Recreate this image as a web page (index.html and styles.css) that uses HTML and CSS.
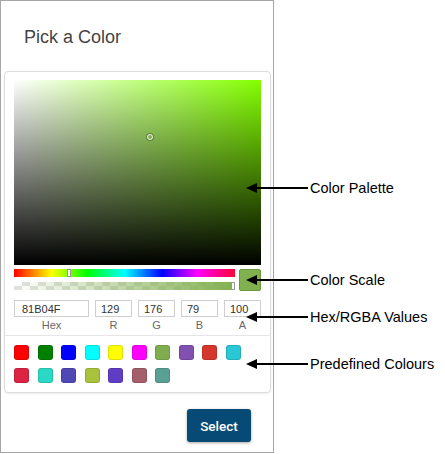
FILE: index.html
```html
<!DOCTYPE html>
<html lang="en">
<head>
    <meta charset="UTF-8">
    <meta name="viewport" content="width=device-width, initial-scale=1.0">
    <title>Pick a Color</title>
    <link rel="stylesheet" href="styles.css">
</head>
<body>
    <div id="dialog">
        <h2 class="title">Pick a Color</h2>
        <div class="card">
            <div class="picker">
                <div class="palette">
                    <span class="marker"></span>
                </div>
                <div class="scales">
                    <div class="bars">
                        <div class="hue"><span class="handle" style="left: 53px"></span></div>
                        <div class="alpha"><span class="handle" style="left: 217px"></span></div>
                    </div>
                    <div class="preview"></div>
                </div>
                <div class="values">
                    <div class="field hex">
                        <input type="text" value="81B04F">
                        <label>Hex</label>
                    </div>
                    <div class="field">
                        <input type="text" value="129">
                        <label>R</label>
                    </div>
                    <div class="field">
                        <input type="text" value="176">
                        <label>G</label>
                    </div>
                    <div class="field">
                        <input type="text" value="79">
                        <label>B</label>
                    </div>
                    <div class="field">
                        <input type="text" value="100">
                        <label>A</label>
                    </div>
                </div>
            </div>
            <div class="swatches">
                <span class="swatch" style="background: #ff0000"></span>
                <span class="swatch" style="background: #008000"></span>
                <span class="swatch" style="background: #0000ff"></span>
                <span class="swatch" style="background: #00ffff"></span>
                <span class="swatch" style="background: #ffff00"></span>
                <span class="swatch" style="background: #ff00ff"></span>
                <span class="swatch" style="background: #80ad4f"></span>
                <span class="swatch" style="background: #8150b0"></span>
                <span class="swatch" style="background: #d6372c"></span>
                <span class="swatch" style="background: #2ac7d4"></span>
                <span class="swatch" style="background: #dc2341"></span>
                <span class="swatch" style="background: #2ad9c5"></span>
                <span class="swatch" style="background: #4f48b5"></span>
                <span class="swatch" style="background: #a8c33b"></span>
                <span class="swatch" style="background: #5f3ec5"></span>
                <span class="swatch" style="background: #a45f6b"></span>
                <span class="swatch" style="background: #5a9f94"></span>
            </div>
        </div>
        <div class="actions">
            <button class="select">Select</button>
        </div>
    </div>

    <div class="note" style="top: 180px">
        <svg width="62" height="16" viewBox="0 0 62 16"><polygon points="0,8 11,3 11,13" fill="#000"/><rect x="8" y="7" width="54" height="2" fill="#000"/></svg>
        <span>Color Palette</span>
    </div>
    <div class="note" style="top: 272px">
        <svg width="62" height="16" viewBox="0 0 62 16"><polygon points="0,8 11,3 11,13" fill="#000"/><rect x="8" y="7" width="54" height="2" fill="#000"/></svg>
        <span>Color Scale</span>
    </div>
    <div class="note" style="top: 309px">
        <svg width="62" height="16" viewBox="0 0 62 16"><polygon points="0,8 11,3 11,13" fill="#000"/><rect x="8" y="7" width="54" height="2" fill="#000"/></svg>
        <span>Hex/RGBA Values</span>
    </div>
    <div class="note" style="top: 356px">
        <svg width="62" height="16" viewBox="0 0 62 16"><polygon points="0,8 11,3 11,13" fill="#000"/><rect x="8" y="7" width="54" height="2" fill="#000"/></svg>
        <span>Predefined Colours</span>
    </div>
</body>
</html>
```

FILE: styles.css
```css
body {
    margin: 0;
    background: #fff;
    font-family: "Liberation Sans", Arial, sans-serif;
    position: relative;
    width: 445px;
    height: 454px;
}
#dialog {
    box-sizing: border-box;
    width: 274px;
    height: 453px;
    border: 1px solid #a6a6a6;
    padding: 26px 2px 0 3px;
}
.title {
    margin: 0 0 24px 20px;
    font-size: 18px;
    line-height: 20px;
    font-weight: normal;
    color: #444;
}
.card {
    width: 267px;
    box-sizing: border-box;
    border: 1px solid #dcdcdc;
    border-radius: 4px;
    box-shadow: 0 1px 2px rgba(0, 0, 0, 0.08);
}
.picker {
    padding: 8px 9px 3px 9px;
}
.palette {
    position: relative;
    height: 185px;
    background:
        linear-gradient(to top, #000, rgba(0, 0, 0, 0)),
        linear-gradient(to right, #fff, hsl(89, 100%, 50%));
}
.marker {
    position: absolute;
    left: 133px;
    top: 54px;
    width: 4px;
    height: 4px;
    border: 1px solid #eee;
    border-radius: 50%;
    box-shadow: 0 0 0 1px rgba(0, 0, 0, 0.25);
}
.scales {
    display: flex;
    gap: 4px;
    margin-top: 4px;
}
.bars {
    width: 222px;
    display: flex;
    flex-direction: column;
    gap: 5px;
}
.hue, .alpha {
    position: relative;
    height: 8px;
}
.hue {
    background: linear-gradient(to right, #f00 0%, #ff0 17%, #0f0 33%, #0ff 50%, #00f 67%, #f0f 83%, #f03 100%);
}
.alpha {
    background:
        linear-gradient(to right, rgba(129, 176, 79, 0), rgba(129, 176, 79, 1)),
        repeating-conic-gradient(#e2e2e2 0% 25%, #fff 0% 50%) 0 0 / 16px 8px;
}
.handle {
    position: absolute;
    top: 0;
    box-sizing: border-box;
    width: 4px;
    height: 8px;
    background: #fff;
    border: 1px solid #999;
}
.preview {
    box-sizing: border-box;
    width: 22px;
    height: 22px;
    background: #81b04f;
    border: 1px solid #6c9840;
    border-radius: 2px;
}
.values {
    display: flex;
    gap: 6px;
    margin-top: 9px;
}
.field {
    display: flex;
    flex-direction: column;
    align-items: center;
    width: 37px;
}
.field.hex {
    width: 75px;
}
.field input {
    box-sizing: border-box;
    width: 100%;
    height: 17px;
    border: 1px solid #cfcfcf;
    padding: 0 0 0 5px;
    font-family: "Liberation Sans", Arial, sans-serif;
    font-size: 11px;
    color: #333;
    outline: none;
}
.field.hex input {
    padding-left: 7px;
}
.field label {
    margin-top: 1px;
    font-size: 11px;
    line-height: 14px;
    color: #666;
}
.swatches {
    border-top: 1px solid #e6e6e6;
    padding: 9px 9px 9px 9px;
    display: grid;
    grid-template-columns: repeat(10, 15px);
    grid-auto-rows: 15px;
    column-gap: 8.5px;
    row-gap: 8px;
}
.swatch {
    box-sizing: border-box;
    border-radius: 3px;
    border: 1px solid rgba(0, 0, 0, 0.12);
}
.actions {
    display: flex;
    justify-content: flex-end;
    padding: 16px 20px 0 0;
}
.select {
    width: 64px;
    height: 33px;
    border: none;
    border-radius: 3px;
    background: #064a75;
    color: #fff;
    font-family: Roboto, "Liberation Sans", sans-serif;
    font-size: 13.5px;
    font-weight: 500;
    box-shadow: 0 1px 3px rgba(0, 0, 0, 0.35);
    cursor: pointer;
}
.note {
    position: absolute;
    left: 246px;
    display: flex;
    align-items: center;
    gap: 2px;
    height: 16px;
    font-size: 14.5px;
    color: #000;
}
```
